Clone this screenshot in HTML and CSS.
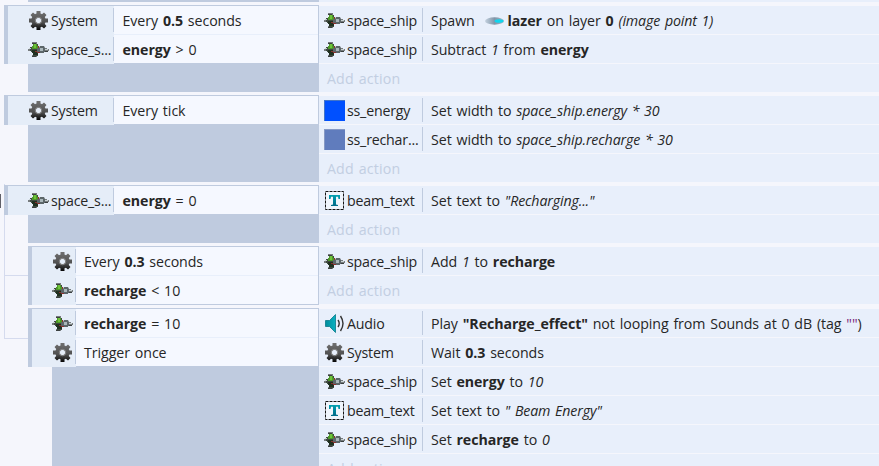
FILE: index.html
```html
<!DOCTYPE html>
<html lang="en">
<head>
<meta charset="utf-8">
<title>Event sheet</title>
<link rel="stylesheet" href="styles.css">
</head>
<body>
<svg class="defs" aria-hidden="true">
  <defs>
    <linearGradient id="gearFill" x1="0" y1="1" x2="0" y2="20" gradientUnits="userSpaceOnUse"><stop offset="0" stop-color="#707070"/><stop offset=".6" stop-color="#505050"/><stop offset="1" stop-color="#050505"/></linearGradient>
    <linearGradient id="tealFill" x1="0" y1="0" x2="0" y2="1"><stop offset="0" stop-color="#00a0b0"/><stop offset="1" stop-color="#006b88"/></linearGradient>
    <linearGradient id="audioFill"><stop offset="0" stop-color="#008c9c"/><stop offset="1" stop-color="#08b0c0"/></linearGradient>
    <linearGradient id="beamFill"><stop offset="0" stop-color="#c5d2e0"/><stop offset=".5" stop-color="#8095a8"/><stop offset="1" stop-color="#a5b8c8"/></linearGradient>
    <symbol id="gear" viewBox="0 0 21 21">
      <g fill="url(#gearFill)">
        <path d="M8.500 1h4v4h-4zM8.500 16h4v4h-4zM1 8.500h4v4H1zM16 8.500h4v4h-4zM2.500 5 5 2.500 8 5 5 8zM16 2.500 18.500 5 16 8l-3-3zM2.500 16 5 13l3 3-3 2.500zM18.500 16 16 18.500 13 16l3-3z"/>
        <path fill-rule="evenodd" d="M10.500 3.300a7.200 7.200 0 1 0 0 14.400 7.200 7.200 0 0 0 0-14.400zm0 4.500a2.700 2.700 0 1 1 0 5.400 2.700 2.700 0 0 1 0-5.400z"/>
      </g>
      <circle cx="10.500" cy="10.500" r="3.200" fill="none" stroke="#8a8a8a"/>
    </symbol>
    <symbol id="ship" viewBox="0 0 21 21">
      <path fill="#777c7e" d="M0 10h4v2H0zM4 3h5v2H4zM4 16h5v2H4zM16 9h3v1h2v2h-2v1h-3z"/>
      <path fill="#3f4a40" d="M5 5h5v12H5zM2 8h3v5H3v-1H2z"/>
      <path fill="#4d9a28" d="M5 5h4v2h2v3H4V7h1z"/>
      <path fill="#6fc43a" d="M6 5h2v4H6z"/>
      <path fill="#203020" d="M4 11h6v5H5v-2H4z"/>
      <path fill="#8b2f2d" d="M10 7h1v2h-1zM7 12h5v2H9v-1H7z"/>
      <path fill="#5c6669" d="M9 9h2l1-2h4l1 2v4h-1v1h-4v-1H9z"/>
      <path fill="#aab7bb" d="M12 9h3v3h-3z"/>
      <path fill="#c9d2d4" d="M1 9h2v1H1zM17 10h3v1h-3z"/>
      <path fill="#3b4040" d="M4 4h4v1H4zM4 17h4v1H4zM17 12h3v1h-3z"/>
    </symbol>
    <symbol id="textobj" viewBox="0 0 21 21">
      <rect x="1.500" y="1.500" width="18" height="18" fill="#f0f5fc" stroke="#151515" stroke-dasharray="3 1"/>
      <path fill="url(#tealFill)" d="M5 5h11v4h-1.500L14 6.800h-2v7.700l2 .5v1H7v-1l2-.5V6.800H7L6.500 9H5z"/>
    </symbol>
    <symbol id="audio" viewBox="0 0 21 21">
      <path fill="url(#audioFill)" stroke="#087989" stroke-width=".8" d="M1.500 7.500h4l6-6v18l-6-6h-4z"/>
      <path fill="none" stroke="#333" stroke-width="1.400" d="M14 7q2.400 3.500 0 7M16.500 3q5 7.500 0 15"/>
    </symbol>
    <symbol id="lazer" viewBox="0 0 19 8">
      <ellipse cx="9.500" cy="4" rx="9.500" ry="3.700" fill="url(#beamFill)"/>
      <ellipse cx="14" cy="4" rx="4.500" ry="1.800" fill="#10d5ee"/>
    </symbol>
  </defs>
</svg>
<main class="sheet">
  <div class="event tail"><div class="conditions"></div><div class="actions"></div></div>

  <section class="event">
    <div class="conditions"><div class="box">
      <div class="cond"><div class="who"><svg class="icon"><use href="#gear"/></svg><span>System</span></div><p>Every <b>0.5</b> seconds</p></div>
      <div class="cond"><div class="who"><svg class="icon"><use href="#ship"/></svg><span>space_s...</span></div><p><b>energy</b> &gt; 0</p></div>
    </div></div>
    <div class="actions">
      <div class="act"><div class="who"><svg class="icon"><use href="#ship"/></svg><span>space_ship</span></div><p>Spawn <svg class="beam"><use href="#lazer"/></svg><b>lazer</b> on layer <b>0</b> <i>(image point 1)</i></p></div>
      <div class="act"><div class="who"><svg class="icon"><use href="#ship"/></svg><span>space_ship</span></div><p>Subtract <i>1</i> from <b>energy</b></p></div>
      <div class="add">Add action</div>
    </div>
  </section>

  <section class="event">
    <div class="conditions"><div class="box">
      <div class="cond"><div class="who"><svg class="icon"><use href="#gear"/></svg><span>System</span></div><p>Every tick</p></div>
    </div></div>
    <div class="actions">
      <div class="act"><div class="who"><span class="swatch blue"></span><span>ss_energy</span></div><p>Set width to <i>space_ship.energy * 30</i></p></div>
      <div class="act"><div class="who"><span class="swatch slate"></span><span>ss_rechar...</span></div><p>Set width to <i>space_ship.recharge * 30</i></p></div>
      <div class="add">Add action</div>
    </div>
  </section>

  <div class="group">
    <section class="event">
      <div class="conditions"><div class="box">
        <div class="cond"><div class="who"><svg class="icon"><use href="#ship"/></svg><span>space_s...</span></div><p><b>energy</b> = 0</p></div>
      </div></div>
      <div class="actions">
        <div class="act"><div class="who"><svg class="icon"><use href="#textobj"/></svg><span>beam_text</span></div><p>Set text to <i>"Recharging..."</i></p></div>
        <div class="add">Add action</div>
      </div>
    </section>

    <section class="event sub">
      <div class="conditions"><div class="box">
        <div class="cond"><div class="who"><svg class="icon"><use href="#gear"/></svg></div><p>Every <b>0.3</b> seconds</p></div>
        <div class="cond"><div class="who"><svg class="icon"><use href="#ship"/></svg></div><p><b>recharge</b> &lt; 10</p></div>
      </div></div>
      <div class="actions">
        <div class="act"><div class="who"><svg class="icon"><use href="#ship"/></svg><span>space_ship</span></div><p>Add <i>1</i> to <b>recharge</b></p></div>
        <div class="add">Add action</div>
      </div>
    </section>

    <section class="event sub">
      <div class="conditions"><div class="box">
        <div class="cond"><div class="who"><svg class="icon"><use href="#ship"/></svg></div><p><b>recharge</b> = 10</p></div>
        <div class="cond"><div class="who"><svg class="icon"><use href="#gear"/></svg></div><p>Trigger once</p></div>
      </div></div>
      <div class="actions">
        <div class="act"><div class="who"><svg class="icon"><use href="#audio"/></svg><span>Audio</span></div><p>Play <b>"Recharge_effect"</b> not looping from Sounds at 0 dB (tag <span class="str">""</span>)</p></div>
        <div class="act"><div class="who"><svg class="icon"><use href="#gear"/></svg><span>System</span></div><p>Wait <b>0.3</b> seconds</p></div>
        <div class="act"><div class="who"><svg class="icon"><use href="#ship"/></svg><span>space_ship</span></div><p>Set <b>energy</b> to <i>10</i></p></div>
        <div class="act"><div class="who"><svg class="icon"><use href="#textobj"/></svg><span>beam_text</span></div><p>Set text to <i>" Beam Energy"</i></p></div>
        <div class="act"><div class="who"><svg class="icon"><use href="#ship"/></svg><span>space_ship</span></div><p>Set <b>recharge</b> to <i>0</i></p></div>
        <div class="add">Add action</div>
      </div>
    </section>
  </div>
</main>
</body>
</html>
```
FILE: styles.css
```css
* { box-sizing: border-box; }
body { margin: 0; background: #f5f6fc; color: #262626; font: 14.2px/28px "Open Sans", "Noto Sans", sans-serif; letter-spacing: -0.06px; word-spacing: 1.2px; }
p { margin: 0; line-height: 29px; }
i { letter-spacing: -0.13px; }
.defs { position: absolute; width: 0; height: 0; }
.sheet { height: 466px; overflow: hidden; }
.event { display: grid; grid-template-columns: 291px 1fr; margin: 0 0 3px 28px; }
.event.sub { grid-template-columns: 267px 1fr; margin-left: 52px; }
.event.tail .conditions, .event.tail .actions { height: 2px; }
.event.tail .actions { background: #e8effb; padding: 0; }
.conditions { background: #bfcbdf; }
.box { margin-left: -24px; border: 1px solid #bfcbdf; border-left-width: 4px; background: #f5f8ff; display: grid; gap: 1px; background-clip: padding-box; }
.cond { display: grid; grid-template-columns: 106px 1fr; height: 28px; background: #f5f8ff; box-shadow: 0 1px #e8effb; }
.cond:last-child { box-shadow: none; }
.who { display: flex; align-items: flex-start; padding-top: 4px; position: relative; white-space: nowrap; letter-spacing: -0.2px; }
.who span:last-child { line-height: 29px; margin-top: -4px; }
.cond .who { background: #e5edf8; box-shadow: 0 1px #e5edf8; padding-left: 20px; }
.cond:last-child .who { box-shadow: none; }
.who::after { content: ""; position: absolute; right: 0; top: 2px; width: 1px; height: 24px; background: #bfcbdf; }
.sub .cond { grid-template-columns: 44px 1fr; }
.cond p { padding-left: 8.5px; white-space: nowrap; }
.sub .cond p { padding-left: 8px; }
.icon { width: 21px; height: 21px; margin-right: 2px; flex: none; }
.actions { display: grid; gap: 1px; padding-top: 1px; align-content: start; }
.act { display: grid; grid-template-columns: 104px 1fr; height: 28px; background: #e8effb; }
.act .who { padding-left: 5px; }
.act p { padding-left: 8px; white-space: nowrap; }
.add { height: 28px; line-height: 30px; padding-left: 8px; background: #e8effb; color: #c2cee2; letter-spacing: 0.15px; }
.swatch { width: 21px; height: 21px; margin-right: 2px; border: 1px solid; border-right: 0; border-bottom: 0; flex: none; }
.blue { background: #0050ff; border-color: #4274c8; }
.slate { background: #607cbd; border-color: #8699c4; }
.beam { width: 19px; height: 8px; margin: 0 4px 0 5px; vertical-align: 1px; }
.str { color: #7b267b; }
.group { position: relative; }
.group::before { content: ""; position: absolute; left: 4px; top: -1px; width: 23px; height: 154px; border: solid #d5dbee; border-width: 0 0 1px 1px; background: linear-gradient(#d5dbee, #d5dbee) 0 91px / 23px 1px no-repeat; }
.group::after { content: ""; position: absolute; left: 0; top: 9px; width: 1px; height: 14px; background: #606068; }
.group .event:first-child .box { position: relative; }
```
